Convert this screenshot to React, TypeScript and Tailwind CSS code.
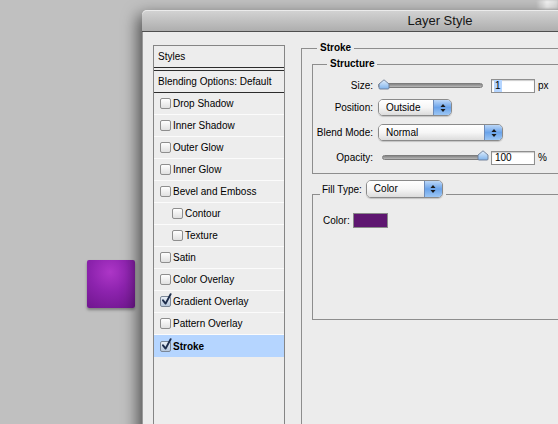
import React from "react";

function CheckBox({ checked }: { checked?: boolean }) {
  return (
    <div className="relative w-[11px] h-[11px] shrink-0">
      <div
        className={
          checked
            ? "w-[11px] h-[11px] rounded-[2px] border border-[#7b8797] bg-gradient-to-b from-[#e8eef6] to-[#b8c8dc]"
            : "w-[11px] h-[11px] rounded-[2px] border border-[#8e8e8e] bg-gradient-to-b from-white to-[#e0e0e0]"
        }
      />
      {checked && (
        <svg className="absolute left-[1px] -top-[3px]" width="11" height="13" viewBox="0 0 11 13">
          <path d="M2 7.3 L4.6 10.6 L9.6 1.2" fill="none" stroke="#1d2d4c" strokeWidth="1.9" strokeLinecap="round" strokeLinejoin="round" />
        </svg>
      )}
    </div>
  );
}

function Arrows() {
  return (
    <svg width="6" height="10" viewBox="0 0 6 10">
      <path d="M0.5 4 L3 1 L5.5 4 Z" fill="#1a1a1a" />
      <path d="M0.5 6 L3 9 L5.5 6 Z" fill="#1a1a1a" />
    </svg>
  );
}

function Popup({ label, wide }: { label: string; wide: "pos" | "blend" | "fill" }) {
  const w = wide === "pos" ? "w-[74px] h-[17px]" : wide === "blend" ? "w-[125px] h-[17px]" : "w-[77px] h-[18px]";
  return (
    <div className={`${w} flex rounded-[5px] border border-[#8a8a8a] overflow-hidden shadow-[0_1px_1px_rgba(0,0,0,0.18)]`}>
      <div className="flex-1 flex items-center pl-[7px] bg-gradient-to-b from-white via-[#f6f6f6] to-[#dcdcdc] text-[10px] leading-none text-black">
        {label}
      </div>
      <div className="w-[18px] border-l border-[#6d8bb8] bg-gradient-to-b from-[#bcd7f7] via-[#6aa3ea] to-[#9cc6f4] flex items-center justify-center">
        <Arrows />
      </div>
    </div>
  );
}

function Thumb() {
  return (
    <svg width="12" height="11" viewBox="0 0 12 11">
      <defs>
        <linearGradient id="tg" x1="0" y1="0" x2="0" y2="1">
          <stop offset="0" stopColor="#e3f0fd" />
          <stop offset="1" stopColor="#7fb3ec" />
        </linearGradient>
      </defs>
      <path d="M1 5 L6 0.8 L11 5 L11 9 Q11 10 10 10 L2 10 Q1 10 1 9 Z" fill="url(#tg)" stroke="#6b7c94" strokeWidth="0.9" />
    </svg>
  );
}

function Track() {
  return <div className="h-[5px] w-full rounded-full border border-[#7c7c7c] bg-gradient-to-b from-[#858585] to-[#b9b9b9]" />;
}

function Field({ value, selected }: { value: string; selected?: boolean }) {
  return (
    <div className="w-[44px] h-[14px] border border-[#8f8f8f] bg-white shadow-[inset_0_1px_1px_rgba(0,0,0,0.2)] flex items-center pl-[2px] text-[10px] leading-none text-black">
      {selected ? <span className="bg-[#b5d5ff] px-[1px] leading-[12px]">{value}</span> : <span className="pl-[1px]">{value}</span>}
    </div>
  );
}

const rows: { label: string; checked?: boolean; indent?: boolean; selected?: boolean }[] = [
  { label: "Drop Shadow" },
  { label: "Inner Shadow" },
  { label: "Outer Glow" },
  { label: "Inner Glow" },
  { label: "Bevel and Emboss" },
  { label: "Contour", indent: true },
  { label: "Texture", indent: true },
  { label: "Satin" },
  { label: "Color Overlay" },
  { label: "Gradient Overlay", checked: true },
  { label: "Pattern Overlay" },
  { label: "Stroke", checked: true, selected: true },
];

export default function App() {
  return (
    <div className="relative w-[558px] h-[424px] overflow-hidden bg-[#c0c0c0] font-['Liberation_Sans',Arial,sans-serif] text-[10px] text-black">
      <div className="absolute left-[536px] top-0 w-[22px] h-[9px] bg-gradient-to-r from-transparent via-[#f4f4f4] to-[#dcdcdc] blur-[1px]" />

      <div className="absolute left-[87px] top-[260px] w-[48px] h-[48px] rounded-[2px] bg-[radial-gradient(circle_at_48%_25%,#ad36c7_0%,#8d23ae_45%,#6e168d_100%)] shadow-[0_2px_3px_rgba(0,0,0,0.35)]" />

      <div className="absolute left-[142px] top-[10px] w-[596px] h-[440px] flex flex-col rounded-t-[5px] shadow-[-4px_5px_16px_rgba(0,0,0,0.6)]">
        <div className="h-[22px] shrink-0 rounded-t-[5px] border-b border-[#4f4f4f] bg-gradient-to-b from-[#d4d4d4] to-[#aeaeae] shadow-[inset_0_1px_0_rgba(255,255,255,0.55)] flex items-center justify-center text-[13px] text-[#161616]">
          Layer Style
        </div>
        <div className="flex-1 bg-[#ececec] flex pl-[11px] pr-[11px] pt-[10px] gap-[16px] border-l border-[#9a9a9a]">
          <div className="mt-[3px] -ml-[1px] w-[132px] h-[420px] shrink-0 border border-[#858585] bg-[#ededed]">
            <div className="h-[21px] flex items-center pl-[4px]">Styles</div>
            <div className="h-[4px] border-t border-b border-[#2c2c2c]" />
            <div className="h-[22px] flex items-center pl-[4px] border-b border-[#2c2c2c]">Blending Options: Default</div>
            {rows.map((r) => (
              <div
                key={r.label}
                className={
                  "h-[22px] flex items-center gap-[2px] " +
                  (r.indent ? "pl-[18px] " : "pl-[6px] ") +
                  (r.selected ? "bg-[#b5d5ff] font-bold" : "border-b border-[#fbfbfb]")
                }
              >
                <CheckBox checked={r.checked} />
                <span>{r.label}</span>
              </div>
            ))}
          </div>

          <fieldset className="flex-1 h-[430px] border border-[#8d8d8d] pl-[10px] pr-[10px] pt-[4px]">
            <legend className="ml-[5px] px-[3px] font-bold leading-[12px]">Stroke</legend>

            <fieldset className="border border-[#8d8d8d] pt-[7px] pb-[7px]">
              <legend className="ml-[14px] px-[3px] font-bold leading-[12px]">Structure</legend>
              <div className="flex flex-col">
                <div className="h-[17px] flex items-center">
                  <div className="w-[60px] text-right">Size:</div>
                  <div className="ml-[5px] w-[105px] h-[17px] relative flex items-center">
                    <Track />
                    <div className="absolute left-0 top-[2px]">
                      <Thumb />
                    </div>
                  </div>
                  <div className="ml-[8px]">
                    <Field value="1" selected />
                  </div>
                  <span className="ml-[3px]">px</span>
                </div>

                <div className="mt-[5px] h-[17px] flex items-center">
                  <div className="w-[60px] text-right">Position:</div>
                  <div className="ml-[5px]">
                    <Popup label="Outside" wide="pos" />
                  </div>
                </div>

                <div className="mt-[8px] h-[17px] flex items-center">
                  <div className="w-[60px] text-right">Blend Mode:</div>
                  <div className="ml-[5px]">
                    <Popup label="Normal" wide="blend" />
                  </div>
                </div>

                <div className="mt-[8px] h-[17px] flex items-center">
                  <div className="w-[60px] text-right">Opacity:</div>
                  <div className="ml-[9px] w-[101px] h-[17px] relative flex items-center">
                    <Track />
                    <div className="absolute left-[95px] top-[1px]">
                      <Thumb />
                    </div>
                  </div>
                  <div className="ml-[8px]">
                    <Field value="100" />
                  </div>
                  <span className="ml-[3px]">%</span>
                </div>
              </div>
            </fieldset>

            <fieldset className="mt-[9px] h-[137px] border border-[#8d8d8d] pl-[10px] pt-[7px]">
              <legend className="-ml-[3px] pl-[2px] pr-[3px] pb-[5px]">
                <span className="relative -top-[3px] inline-flex items-center gap-[4px]">
                  <span>Fill Type:</span>
                  <Popup label="Color" wide="fill" />
                </span>
              </legend>
              <div className="h-[15px] flex items-center">
                <span>Color:</span>
                <div className="ml-[3px] w-[35px] h-[15px] bg-[#5e1670] border border-[#8a8a8a]" />
              </div>
            </fieldset>
          </fieldset>
        </div>
      </div>
    </div>
  );
}
